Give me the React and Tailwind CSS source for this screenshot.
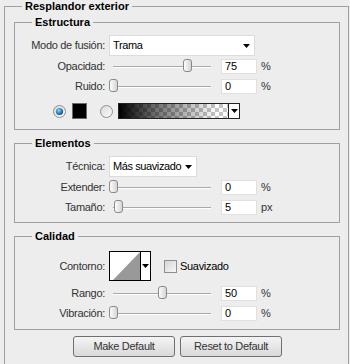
import React from "react";

function Arrow() {
  return (
    <svg width="7" height="4" viewBox="0 0 7 4">
      <path d="M0 0h7L3.5 4z" fill="#000" />
    </svg>
  );
}

function Thumb() {
  return (
    <svg width="9" height="13" viewBox="0 0 9 13">
      <defs>
        <linearGradient id="thumbFill" x1="0" x2="1">
          <stop offset="0" stopColor="#ffffff" />
          <stop offset="1" stopColor="#d2d2d2" />
        </linearGradient>
      </defs>
      <rect x="0.5" y="0.5" width="8" height="12" rx="2.5" fill="url(#thumbFill)" stroke="#8a8a8a" />
    </svg>
  );
}

function Radio({ checked }) {
  return (
    <svg width="13" height="13" viewBox="0 0 13 13">
      <defs>
        <linearGradient id="radioOff" x1="0" y1="0" x2="1" y2="1">
          <stop offset="0" stopColor="#d8d8d8" />
          <stop offset="1" stopColor="#fbfbfb" />
        </linearGradient>
        <radialGradient id="radioOn" cx="0.4" cy="0.35" r="0.7">
          <stop offset="0" stopColor="#8fd3f7" />
          <stop offset="0.6" stopColor="#2a7fc0" />
          <stop offset="1" stopColor="#0f3f78" />
        </radialGradient>
      </defs>
      <circle cx="6.5" cy="6.5" r="6" fill="url(#radioOff)" stroke="#8f8f8f" />
      {checked && <circle cx="6.5" cy="6.5" r="3.6" fill="url(#radioOn)" />}
    </svg>
  );
}

function Label({ children }) {
  return (
    <div className="w-[90px] shrink-0 whitespace-nowrap text-right tracking-[-0.3px] text-[#333]">
      {children}
    </div>
  );
}

function Slider({ value }) {
  return (
    <div className="relative ml-[4px] w-[108px] h-[15px] shrink-0">
      <div className="absolute left-[4px] w-[98px] top-[7px] h-[2px] border-t border-t-[#a9a9a9] border-b border-b-white" />
      <div className="absolute top-0 leading-none" style={{ left: value * 98 }}>
        <Thumb />
      </div>
    </div>
  );
}

function Field({ children }) {
  return (
    <div className="ml-[4px] w-[36px] h-[15px] bg-white border border-[#e0e0e0] pl-[3px] leading-[13px] text-black">
      {children}
    </div>
  );
}

function SliderRow({ label, value, text, unit, space }) {
  return (
    <div className={`flex items-center h-[15px] ${space}`}>
      <Label>{label}</Label>
      <Slider value={value} />
      <Field>{text}</Field>
      <span className="ml-[4px] text-[#333]">{unit}</span>
    </div>
  );
}

function Group({ title, space, pad, children }) {
  return (
    <fieldset className={`ml-[9px] mr-[8px] border border-[#a0a0a0] ${space} ${pad}`}>
      <legend className="ml-[17px] px-[3px] font-bold leading-[12px] text-black">{title}</legend>
      {children}
    </fieldset>
  );
}

function Select({ width, children }) {
  return (
    <div className={`ml-[4px] h-[21px] bg-white border border-[#dcdcdc] flex items-center justify-between pl-[3px] pr-[4px] text-black whitespace-nowrap tracking-[-0.4px] ${width}`}>
      <span>{children}</span>
      <Arrow />
    </div>
  );
}

export default function App() {
  return (
    <div className="w-[350px] h-[364px] overflow-hidden bg-[#ededed] text-[11px] font-['Liberation_Sans',Arial,sans-serif]">
      <fieldset className="ml-[4px] mr-[1px] h-[400px] border border-[#a0a0a0] pt-[4px]">
        <legend className="ml-[17px] px-[3px] font-bold leading-[12px] text-black">Resplandor exterior</legend>

        <Group title="Estructura" space="" pad="pt-[7px] pb-[10px]">
          <div className="flex items-center h-[21px]">
            <Label>Modo de fusión:</Label>
            <Select width="w-[146px]">Trama</Select>
          </div>
          <SliderRow label="Opacidad:" value={0.75} text="75" unit="%" space="mt-[3px]" />
          <SliderRow label="Ruido:" value={0} text="0" unit="%" space="mt-[5px]" />
          <div className="flex items-center h-[16px] mt-[9px] pl-[38px]">
            <Radio checked />
            <div className="ml-[6px] w-[15px] h-[16px] bg-black border border-[#6a6a6a]" />
            <div className="ml-[13px]">
              <Radio />
            </div>
            <div className="ml-[5px] w-[122px] h-[16px] border border-[#222] flex">
              <div className="flex-1 bg-[image:linear-gradient(to_right,#000,rgba(0,0,0,0.55)_35%,rgba(0,0,0,0)_90%),repeating-conic-gradient(#c4c4c4_0_25%,#ffffff_0_50%)] bg-[length:100%_100%,8px_8px]" />
              <div className="w-[11px] border-l border-[#222] bg-white flex items-center justify-center">
                <Arrow />
              </div>
            </div>
          </div>
        </Group>

        <Group title="Elementos" space="mt-[7px]" pad="pt-[7px] pb-[7px]">
          <div className="flex items-center h-[21px]">
            <Label>Técnica:</Label>
            <Select width="w-[88px]">Más suavizado</Select>
          </div>
          <SliderRow label="Extender:" value={0} text="0" unit="%" space="mt-[3px]" />
          <SliderRow label="Tamaño:" value={0.05} text="5" unit="px" space="mt-[5px]" />
        </Group>

        <Group title="Calidad" space="mt-[7px]" pad="pt-[9px] pb-[8px]">
          <div className="flex items-center h-[30px]">
            <Label>Contorno:</Label>
            <div className="ml-[4px] w-[42px] h-[30px] border border-black bg-white flex">
              <svg width="30" height="28" viewBox="0 0 30 28" className="block">
                <polygon points="3,28 30,0 30,28" fill="#999999" />
              </svg>
              <div className="w-[10px] border-l border-black flex items-center justify-center">
                <Arrow />
              </div>
            </div>
            <div className="ml-[13px] w-[13px] h-[13px] border border-[#8f8f8f] bg-gradient-to-br from-[#d6d6d6] to-[#f7f7f7]" />
            <span className="ml-[3px] text-black tracking-[-0.3px]">Suavizado</span>
          </div>
          <SliderRow label="Rango:" value={0.5} text="50" unit="%" space="mt-[5px]" />
          <SliderRow label="Vibración:" value={0} text="0" unit="%" space="mt-[5px]" />
        </Group>

        <div className="flex gap-[5px] ml-[68px] mt-[6px]">
          <button className="w-[102px] h-[21px] rounded-[3px] border border-[#707070] bg-gradient-to-b from-[#f4f4f4] to-[#d9d9d9] text-[#333] leading-none tracking-[-0.3px]">
            Make Default
          </button>
          <button className="w-[102px] h-[21px] rounded-[3px] border border-[#707070] bg-gradient-to-b from-[#f4f4f4] to-[#d9d9d9] text-[#333] leading-none tracking-[-0.3px]">
            Reset to Default
          </button>
        </div>
      </fieldset>
    </div>
  );
}
